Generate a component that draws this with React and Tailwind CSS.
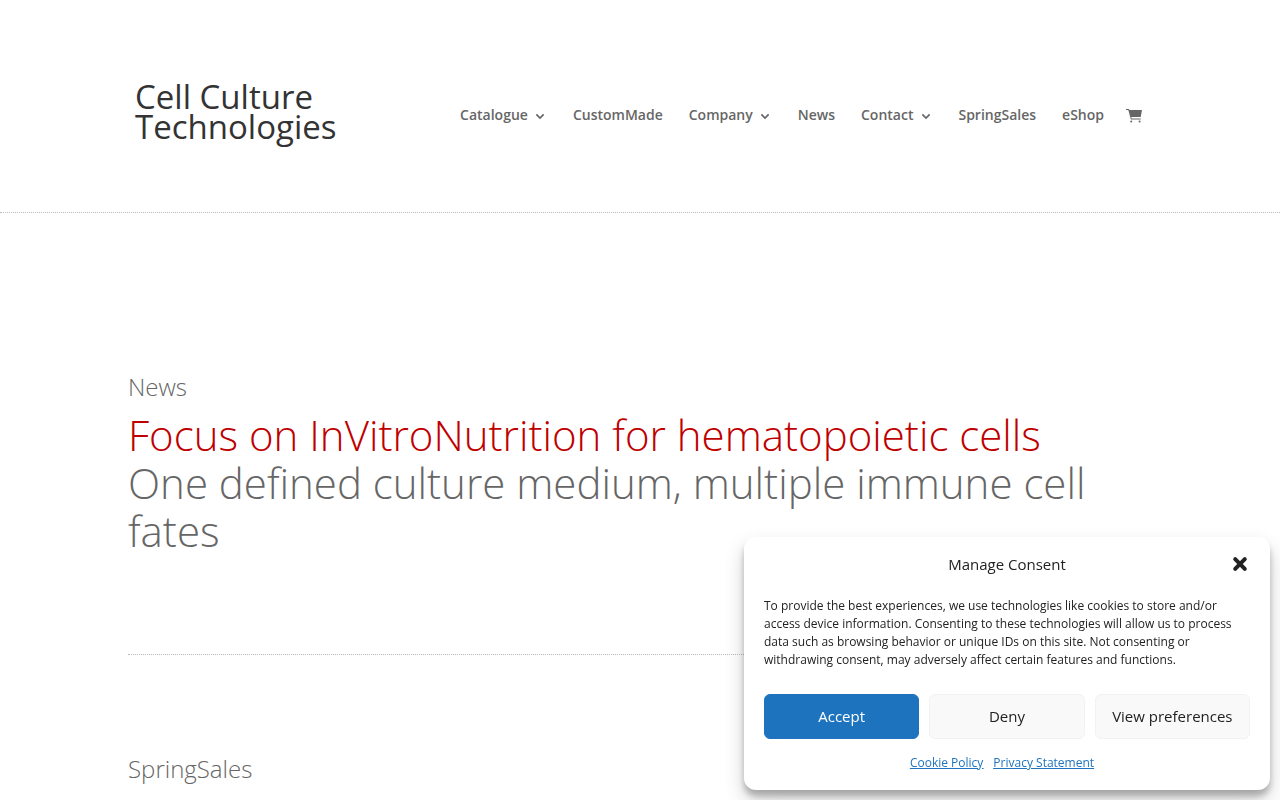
import { useState } from "react";

const menu = [
  { label: "Catalogue", hasSub: true },
  { label: "CustomMade" },
  { label: "Company", hasSub: true },
  { label: "News" },
  { label: "Contact", hasSub: true },
  { label: "SpringSales" },
  { label: "eShop" },
];

// ==========================
// ICONS
// ==========================
const ChevronIcon = () => (
  <svg className="w-2 h-2 mt-1" viewBox="0 0 8 8" fill="none" stroke="currentColor" strokeWidth="1.6">
    <path d="M0.4 1.4 L4 5 L7.6 1.4" />
  </svg>
);

const CartIcon = () => (
  <svg className="w-4 h-4" viewBox="0 0 16 16" fill="currentColor">
    <path d="M0 1h3l0.4 1H16l-1.3 7H5.2l0.5 1.6h9v1H4.9L2.3 2H0z" />
    <circle cx="5.2" cy="13.6" r="1" />
    <circle cx="13.6" cy="13.6" r="1" />
  </svg>
);

const CloseIcon = () => (
  <svg className="w-4 h-4" viewBox="0 0 16 16" fill="none" stroke="currentColor" strokeWidth="4" strokeLinecap="round">
    <path d="M3.2 3.2 L12.8 12.8 M12.8 3.2 L3.2 12.8" />
  </svg>
);

// ==========================
// HEADER
// ==========================
const Header = () => (
  <header className="border-b border-dotted border-[#bbbbbb]">
    <div className="w-4/5 max-w-[1080px] mx-auto pt-[82px] pb-[70px] flex items-center justify-between">
      <a href="#home" className="pl-[7px] text-[33px] leading-[30px] text-[#333333]">
        Cell Culture
        <br />
        Technologies
      </a>

      <nav className="flex items-center gap-[26px] mt-1.5 pr-[10px] text-sm font-semibold text-[#666666]">
        {menu.map((item) => (
          <a key={item.label} href={`#${item.label}`} className="flex items-center">
            {item.label}
            {item.hasSub && (
              <span className="w-[19px] flex justify-center pl-1.5">
                <ChevronIcon />
              </span>
            )}
          </a>
        ))}
        <a href="#cart" aria-label="Cart" className="-ml-1 pt-0.5">
          <CartIcon />
        </a>
      </nav>
    </div>
  </header>
);

// ==========================
// COOKIE BANNER
// ==========================
const ConsentBanner = ({ onClose }) => (
  <section
    aria-label="Manage Consent"
    className="fixed right-[10px] bottom-[10px] w-[526px] px-5 pt-[15px] pb-[18px] rounded-xl bg-white text-[#222222] shadow-[0_10px_20px_rgba(0,0,0,0.19),0_6px_6px_rgba(0,0,0,0.23)]"
  >
    <div className="grid grid-cols-[20px_1fr_20px] items-center">
      <h2 className="col-start-2 text-center text-[15px] leading-6">Manage Consent</h2>
      <button type="button" aria-label="Close" onClick={onClose} className="flex justify-center">
        <CloseIcon />
      </button>
    </div>

    <p className="mt-[21px] text-xs leading-[18px]">
      To provide the best experiences, we use technologies like cookies to store and/or access
      device information. Consenting to these technologies will allow us to process data such as
      browsing behavior or unique IDs on this site. Not consenting or withdrawing consent, may
      adversely affect certain features and functions.
    </p>

    <div className="mt-[25px] grid grid-cols-3 gap-[10px] text-[15px]">
      <button
        type="button"
        onClick={onClose}
        className="h-[45px] rounded-md border border-[#1e73be] bg-[#1e73be] font-medium text-white"
      >
        Accept
      </button>
      <button
        type="button"
        onClick={onClose}
        className="h-[45px] rounded-md border border-[#f2f2f2] bg-[#f9f9f9]"
      >
        Deny
      </button>
      <button
        type="button"
        className="h-[45px] rounded-md border border-[#f2f2f2] bg-[#f9f9f9]"
      >
        View preferences
      </button>
    </div>

    <div className="mt-[15px] flex justify-center gap-[10px] pr-[10px] text-xs leading-[18px] text-[#1e73be] underline">
      <a href="#cookie-policy">Cookie Policy</a>
      <a href="#privacy-statement">Privacy Statement</a>
    </div>
  </section>
);

// ==========================
// PAGE
// ==========================
const App = () => {
  const [showConsent, setShowConsent] = useState(true);

  return (
    <div className="bg-white font-['Open_Sans',sans-serif] text-[#666666]">
      <Header />

      <main className="w-4/5 max-w-[1080px] mx-auto font-light">
        <section className="pt-[158px] pb-[99px] border-b border-dotted border-[#bbbbbb]">
          <h3 className="text-2xl leading-8">News</h3>
          <h1 className="mt-2 text-[42px] leading-[48px]">
            <span className="text-[#bf0000]">Focus on InVitroNutrition for hematopoietic cells</span>
            <br />
            One defined culture medium, multiple immune cell fates
          </h1>
        </section>

        <section className="pt-[98px]">
          <h3 className="text-2xl leading-8">SpringSales</h3>
        </section>
      </main>

      {showConsent && <ConsentBanner onClose={() => setShowConsent(false)} />}
    </div>
  );
};

export default App;
